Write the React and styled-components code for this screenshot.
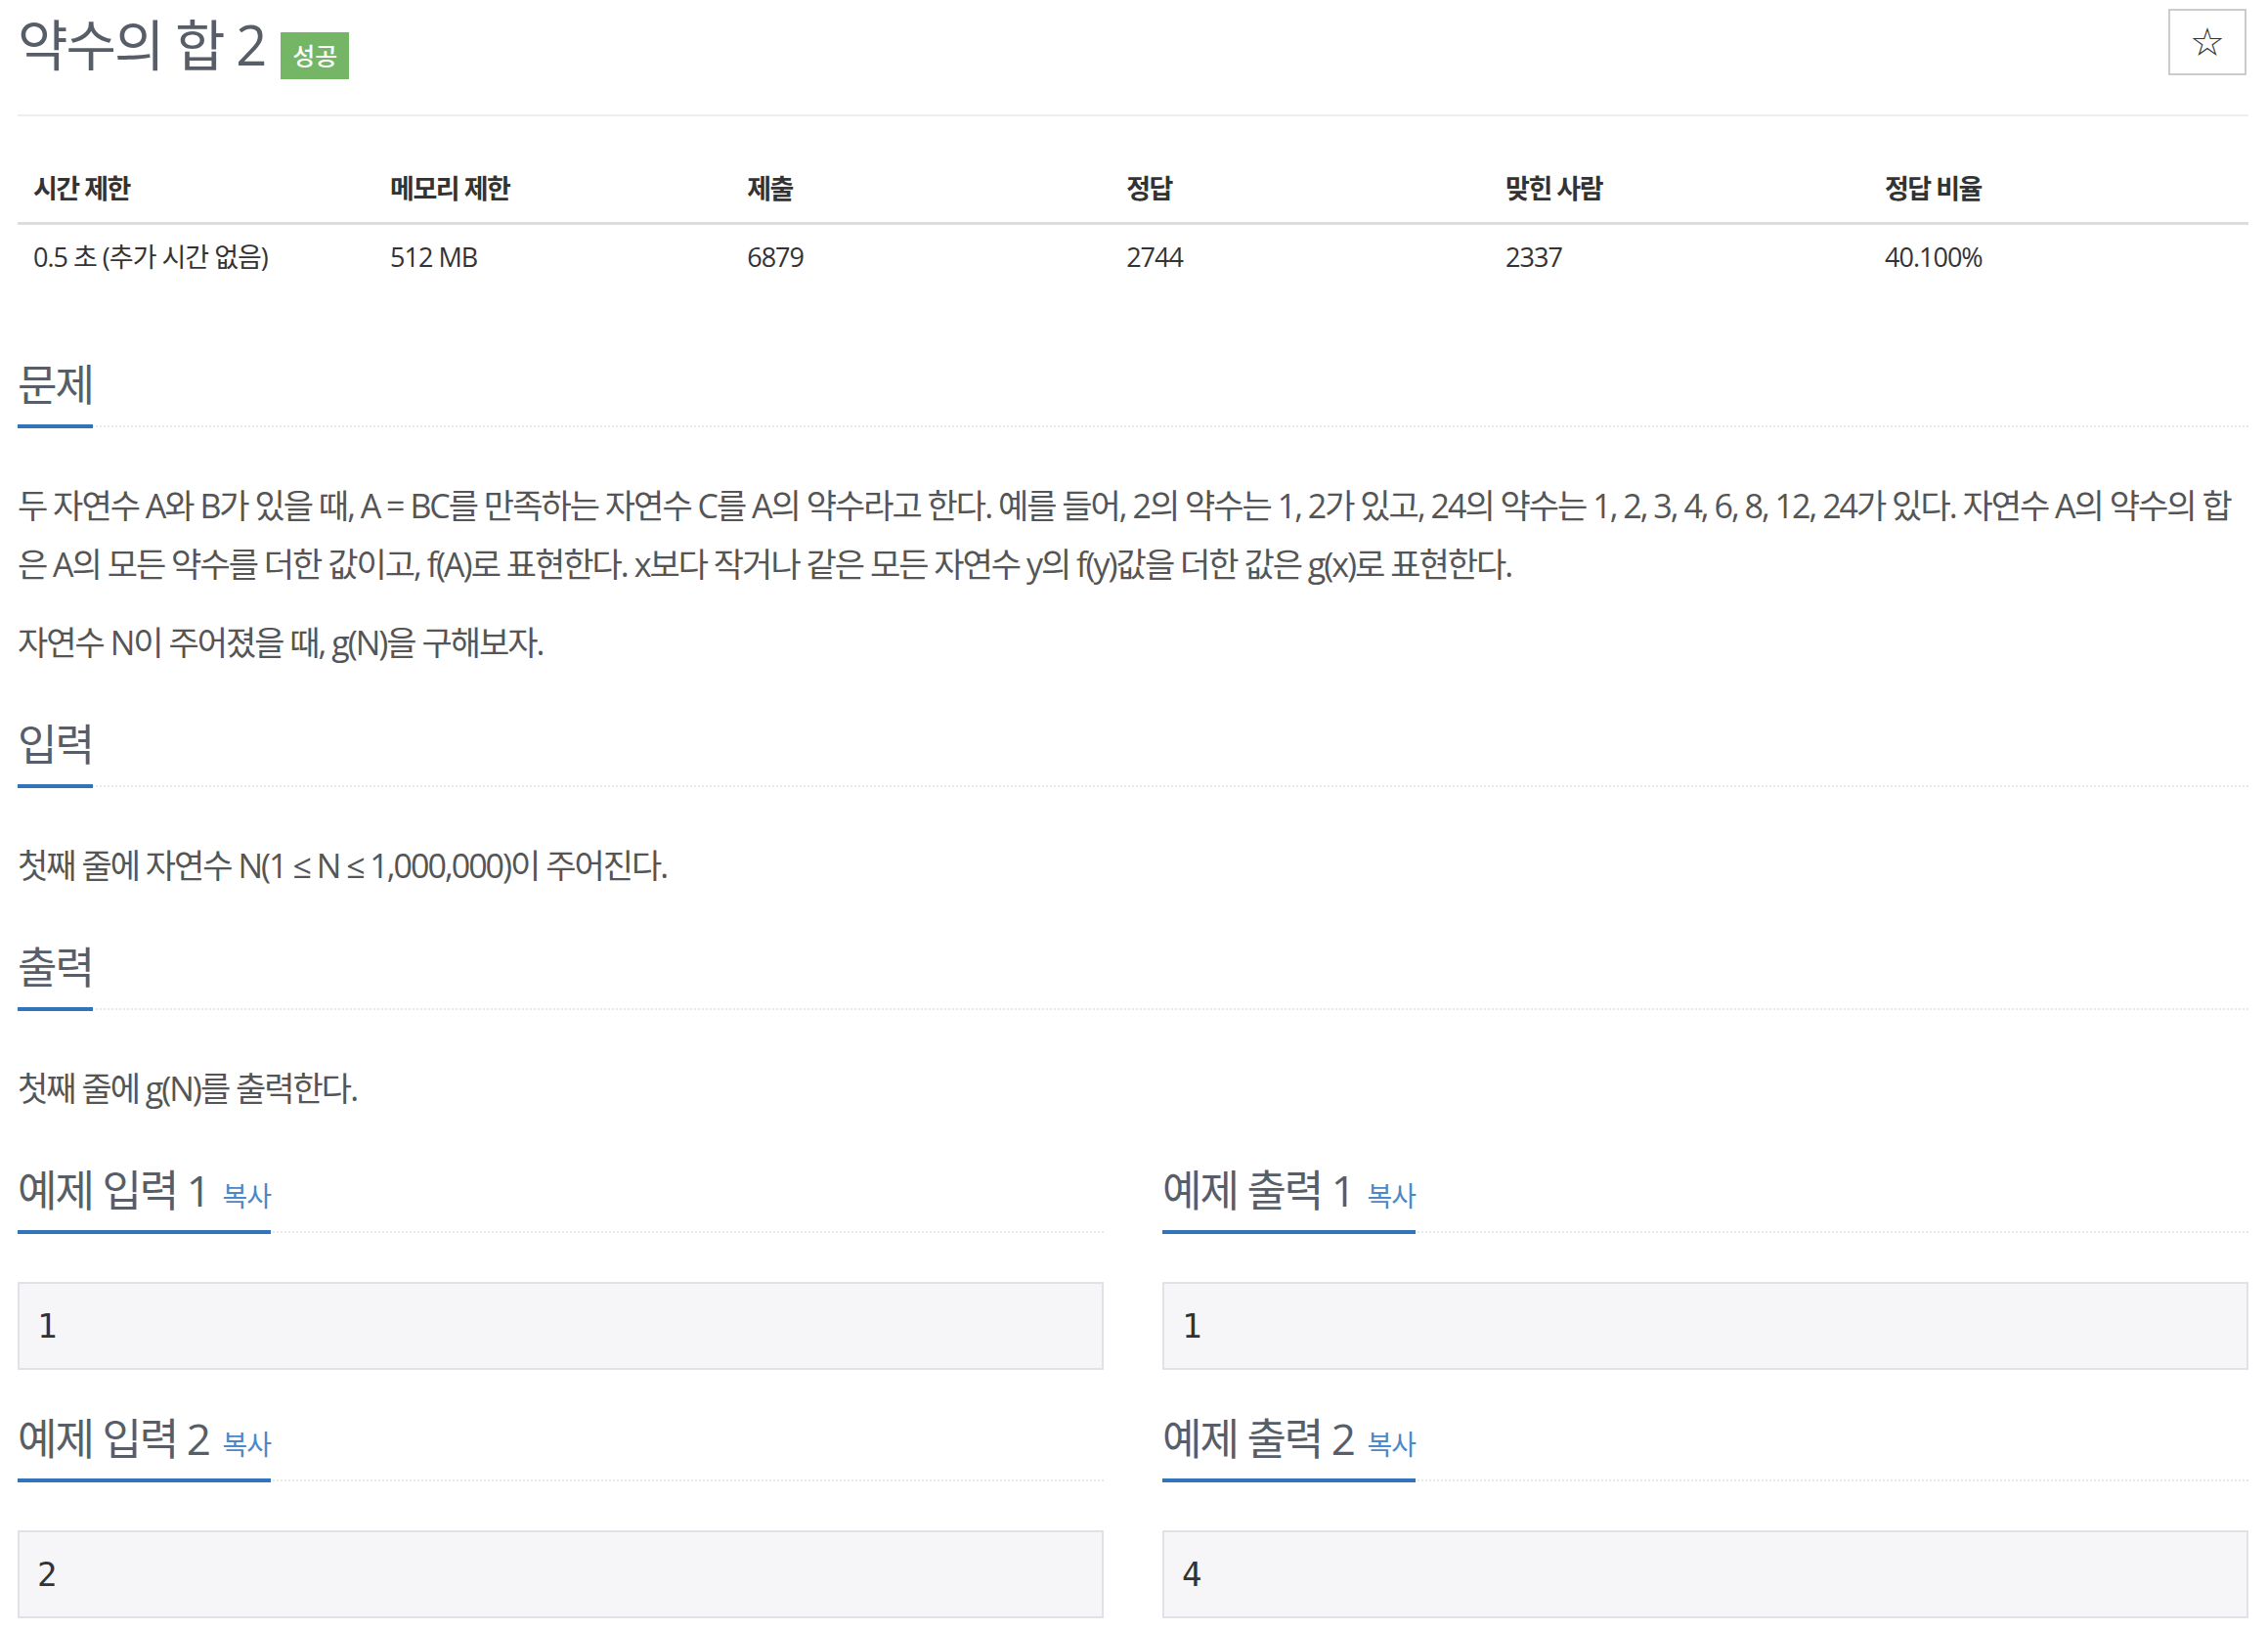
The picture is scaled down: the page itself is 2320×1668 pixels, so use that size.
import styled, { createGlobalStyle } from 'styled-components';

const GlobalStyle = createGlobalStyle`
  body {
    margin: 0;
    background: #fff;
    font-family: "Open Sans", "Noto Sans CJK KR", sans-serif;
    color: #333;
  }
`;

const INFO = [
  { label: '시간 제한', value: '0.5 초 (추가 시간 없음)', width: '16%' },
  { label: '메모리 제한', value: '512 MB', width: '16%' },
  { label: '제출', value: '6879', width: '17%' },
  { label: '정답', value: '2744', width: '17%' },
  { label: '맞힌 사람', value: '2337', width: '17%' },
  { label: '정답 비율', value: '40.100%', width: '17%' },
];

const SAMPLES = [
  { title: '예제 입력 1', data: '1' },
  { title: '예제 출력 1', data: '1' },
  { title: '예제 입력 2', data: '2' },
  { title: '예제 출력 2', data: '4' },
];

export default function App() {
  return (
    <>
      <GlobalStyle />
      <Page>
        <PageHeader>
          <Title>
            <span>약수의 합 2</span>
            <Label>성공</Label>
          </Title>
          <StarButton type="button">☆</StarButton>
        </PageHeader>

        <InfoTable>
          <thead>
            <tr>
              {INFO.map((item) => (
                <th key={item.label} style={{ width: item.width }}>{item.label}</th>
              ))}
            </tr>
          </thead>
          <tbody>
            <tr>
              {INFO.map((item) => (
                <td key={item.label}>{item.value}</td>
              ))}
            </tr>
          </tbody>
        </InfoTable>

        <Section>
          <Headline><h2>문제</h2></Headline>
          <Text>
            두 자연수 A와 B가 있을 때, A = BC를 만족하는 자연수 C를 A의 약수라고 한다. 예를 들어, 2의 약수는 1, 2가 있고, 24의 약수는 1, 2, 3, 4, 6, 8, 12, 24가 있다. 자연수 A의 약수의 합은 A의 모든 약수를 더한 값이고, f(A)로 표현한다. x보다 작거나 같은 모든 자연수 y의 f(y)값을 더한 값은 g(x)로 표현한다.
          </Text>
          <Text>자연수 N이 주어졌을 때, g(N)을 구해보자.</Text>
        </Section>

        <Section>
          <Headline><h2>입력</h2></Headline>
          <Text>첫째 줄에 자연수 N(1 ≤ N ≤ 1,000,000)이 주어진다.</Text>
        </Section>

        <Section>
          <Headline><h2>출력</h2></Headline>
          <Text>첫째 줄에 g(N)를 출력한다.</Text>
        </Section>

        <SampleGrid>
          {SAMPLES.map((s) => (
            <div key={s.title}>
              <Headline>
                <h2>
                  {s.title} <CopyLink>복사</CopyLink>
                </h2>
              </Headline>
              <SampleData>{s.data}</SampleData>
            </div>
          ))}
        </SampleGrid>
      </Page>
    </>
  );
}

const Page = styled.div`
  width: 2282px;
  margin-left: 18px;
`;

const PageHeader = styled.div`
  display: flex;
  justify-content: space-between;
  align-items: flex-start;
  padding-top: 9px;
  padding-bottom: 40px;
  border-bottom: 2px solid #eee;
`;

const Title = styled.h1`
  margin: 4px 0 0;
  font-size: 56px;
  font-weight: 400;
  line-height: 64px;
  letter-spacing: -2px;
  color: #585e68;
  display: flex;
  align-items: flex-start;
  gap: 16px;
`;

const Label = styled.span`
  display: inline-block;
  margin: 20px 0 -4px;
  padding: 0 12px;
  height: 48px;
  line-height: 48px;
  background: #74b566;
  color: #fff;
  font-size: 25px;
  font-weight: 500;
  letter-spacing: 0;
`;

const StarButton = styled.button`
  width: 80px;
  height: 68px;
  margin-right: 2px;
  background: #fff;
  border: 2px solid #ccc;
  color: #333;
  font-family: "DejaVu Sans", sans-serif;
  font-size: 40px;
  line-height: 1;
  padding: 0;
`;

const InfoTable = styled.table`
  width: 100%;
  margin-top: 38px;
  margin-bottom: 40px;
  border-collapse: collapse;
  font-size: 27px;
  color: #333;

  th {
    text-align: left;
    font-weight: 700;
    padding: 16px 16px 14px;
    line-height: 40px;
    letter-spacing: -1.5px;
    border-bottom: 3px solid #ddd;
  }

  td {
    padding: 13px 16px 16px;
    line-height: 40px;
    letter-spacing: -1px;
  }
`;

const Section = styled.section`
  padding-top: 30px;
`;

const Headline = styled.div`
  margin: 0 0 50px;
  border-bottom: 2px dotted #e4e9f0;

  h2 {
    display: inline-block;
    margin: 0 0 -3px;
    padding-bottom: 17px;
    border-bottom: 4px solid #3174bb;
    font-size: 44px;
    font-weight: 400;
    line-height: 48px;
    letter-spacing: -2px;
    color: #585e68;
  }
`;

const Text = styled.p`
  margin: 0 0 20px;
  font-size: 34px;
  line-height: 60px;
  letter-spacing: -2px;
  color: #555;
`;

const CopyLink = styled.a`
  font-size: 28px;
  line-height: 1;
  letter-spacing: -1px;
  color: #4a88c8;
  margin-left: 4px;
`;

const SampleGrid = styled.div`
  display: grid;
  grid-template-columns: 1fr 1fr;
  column-gap: 60px;
  row-gap: 26px;
  padding-top: 30px;
`;

const SampleData = styled.pre`
  margin: 0 0 20px;
  padding: 19px 18px;
  background: #f6f6f8;
  border: 2px solid #e1e1e8;
  font-family: "DejaVu Sans Mono", monospace;
  font-size: 34px;
  line-height: 48px;
  color: #333;
`;
